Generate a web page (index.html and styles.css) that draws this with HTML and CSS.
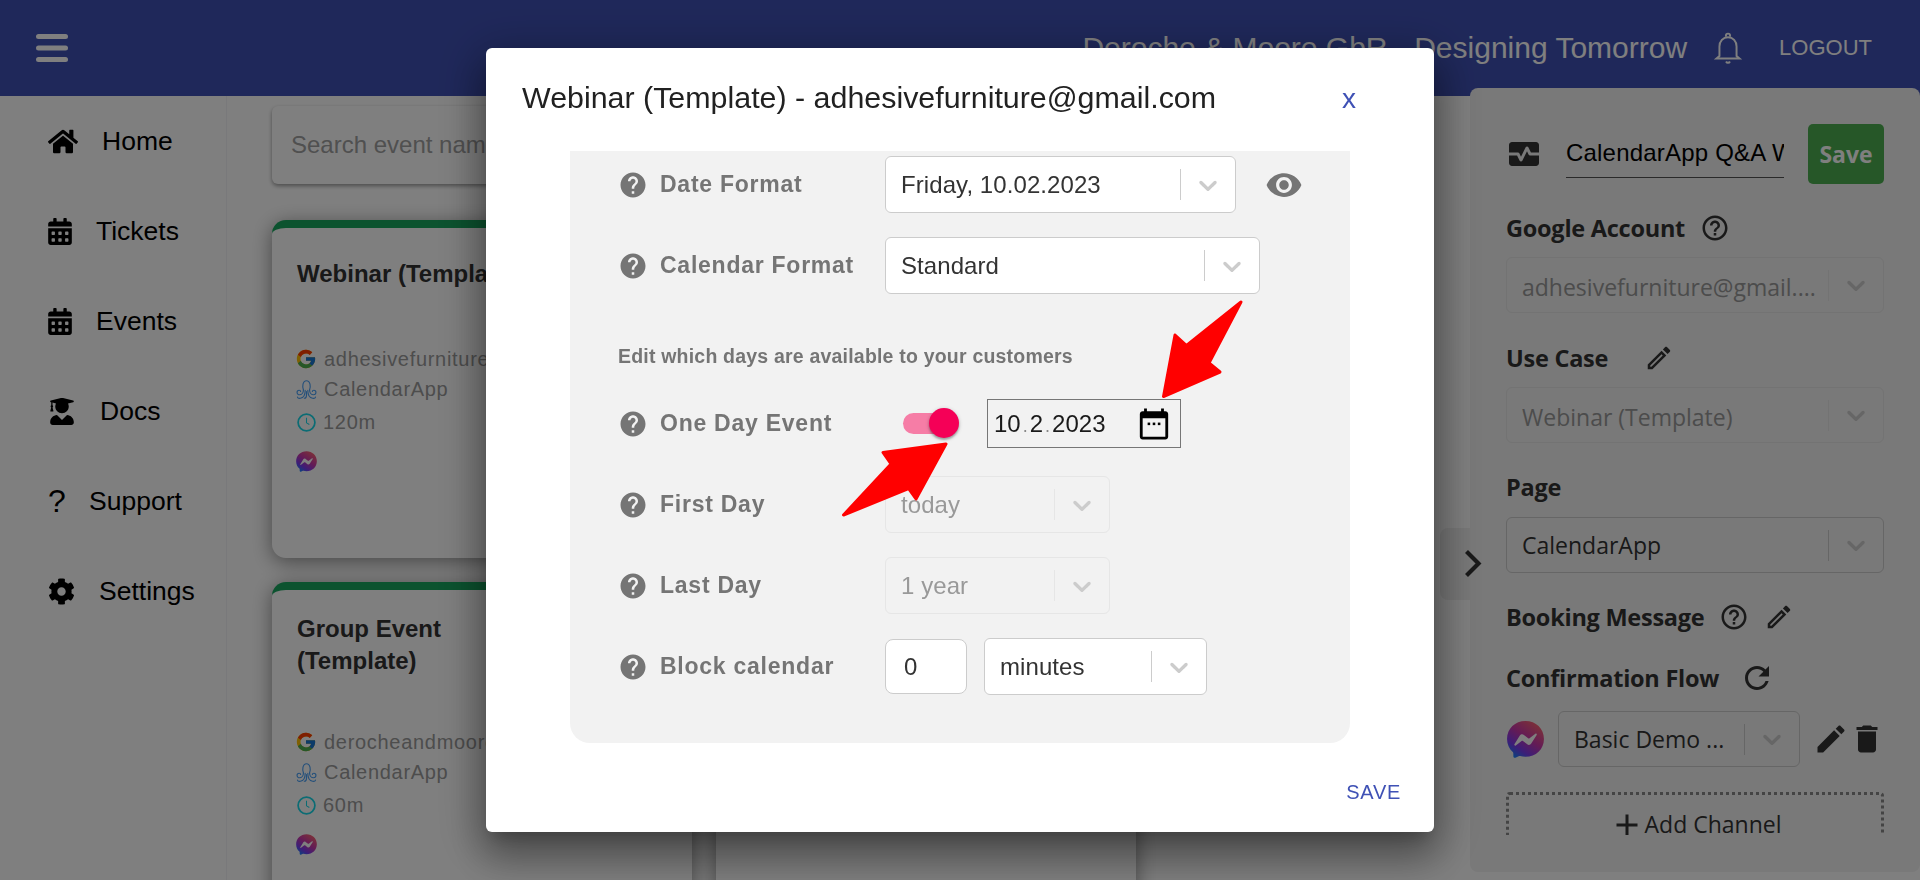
FILE: index.html
```html
<!DOCTYPE html>
<html lang="en">
<head>
<meta charset="utf-8">
<title>Webinar (Template)</title>
<link rel="stylesheet" href="styles.css">
</head>
<body>
<svg class="sprite" aria-hidden="true">
  <defs>
    <linearGradient id="mg" x1="0.85" y1="0" x2="0.15" y2="1">
      <stop offset="0" stop-color="#ff6968"/>
      <stop offset="0.45" stop-color="#c837ab"/>
      <stop offset="0.75" stop-color="#7a3cf0"/>
      <stop offset="1" stop-color="#0a8cff"/>
    </linearGradient>
    <symbol id="i-messenger" viewBox="0 0 40 40">
      <path fill="url(#mg)" d="M20 2C9.9 2 2 9.4 2 19.4c0 5.2 2.1 9.7 5.6 12.8.3.3.5.7.5 1.1l.1 3.2c0 1 1.1 1.7 2 1.3l3.6-1.6c.3-.1.6-.2 1-.1 1.6.5 3.4.7 5.2.7 10.1 0 18-7.4 18-17.4S30.1 2 20 2z"/>
      <path fill="#fff" d="M9.2 24.6l5.3-8.4c.8-1.3 2.6-1.7 3.9-.7l4.2 3.2c.4.3.9.3 1.3 0l5.7-4.3c.8-.6 1.8.3 1.3 1.2l-5.3 8.4c-.8 1.3-2.6 1.7-3.9.7l-4.2-3.2c-.4-.3-.9-.3-1.3 0l-5.7 4.3c-.8.6-1.8-.3-1.3-1.2z"/>
    </symbol>
    <symbol id="i-google" viewBox="0 0 48 48">
      <path fill="#FFC107" d="M43.611 20.083H42V20H24v8h11.303c-1.649 4.657-6.08 8-11.303 8-6.627 0-12-5.373-12-12s5.373-12 12-12c3.059 0 5.842 1.154 7.961 3.039l5.657-5.657C34.046 6.053 29.268 4 24 4 12.955 4 4 12.955 4 24s8.955 20 20 20 20-8.955 20-20c0-1.341-.138-2.65-.389-3.917z"/>
      <path fill="#FF3D00" d="M6.306 14.691l6.571 4.819C14.655 15.108 18.961 12 24 12c3.059 0 5.842 1.154 7.961 3.039l5.657-5.657C34.046 6.053 29.268 4 24 4 16.318 4 9.656 8.337 6.306 14.691z"/>
      <path fill="#4CAF50" d="M24 44c5.166 0 9.86-1.977 13.409-5.192l-6.19-5.238A11.91 11.91 0 0 1 24 36c-5.202 0-9.619-3.317-11.283-7.946l-6.522 5.025C9.505 39.556 16.227 44 24 44z"/>
      <path fill="#1976D2" d="M43.611 20.083H42V20H24v8h11.303a12.04 12.04 0 0 1-4.087 5.571l.003-.002 6.19 5.238C36.971 39.205 44 34 44 24c0-1.341-.138-2.65-.389-3.917z"/>
    </symbol>
    <symbol id="i-octopus" viewBox="0 0 24 24">
      <g fill="none" stroke="currentColor" stroke-width="1.3" stroke-linecap="round">
        <path d="M8.500 12.500C7 9 7.500 2 12 2s5 7 3.500 10.500"/>
        <path d="M8.500 12.500c0 3-2 5.500-4.500 5.500a2.800 2.800 0 0 1-2.800-2.800c0-1.500 1.200-2.400 2.400-2.400 1 0 1.700.7 1.700 1.500"/>
        <path d="M15.500 12.500c0 3 2 5.500 4.500 5.500a2.800 2.800 0 0 0 2.800-2.800c0-1.500-1.200-2.400-2.400-2.400-1 0-1.700.7-1.700 1.500"/>
        <path d="M10.500 13c0 4-1 8-5.500 9-1.500.3-3-.3-3.300-1.300"/>
        <path d="M13.500 13c0 4 1 8 5.500 9 1.500.3 3-.3 3.300-1.300"/>
        <path d="M12 14.500v4c0 2-1 3.500-2.500 3.500"/>
      </g>
    </symbol>
    <symbol id="i-clock" viewBox="0 0 24 24">
      <circle cx="12" cy="12" r="10.600" fill="none" stroke="currentColor" stroke-width="2.200"/>
      <path d="M12 6v6.400l3.600 2.200" fill="none" stroke="currentColor" stroke-width="1.300"/>
    </symbol>
    <symbol id="i-chev" viewBox="0 0 20 20">
      <path d="M4.516 7.548c0.436-0.446 1.043-0.481 1.576 0l3.908 3.747 3.908-3.747c0.533-0.481 1.141-0.446 1.574 0 0.436 0.445 0.408 1.197 0 1.615-0.406 0.418-4.695 4.502-4.695 4.502-0.217 0.223-0.502 0.335-0.787 0.335s-0.57-0.112-0.789-0.335c0 0-4.287-4.084-4.695-4.502s-0.436-1.17 0-1.615z"/>
    </symbol>
    <symbol id="i-help" viewBox="0 0 24 24">
      <path d="M12 2C6.48 2 2 6.48 2 12s4.48 10 10 10 10-4.48 10-10S17.52 2 12 2zm1 17h-2v-2h2v2zm2.07-7.75l-.9.92C13.45 12.9 13 13.5 13 15h-2v-.5c0-1.1.45-2.1 1.17-2.83l1.24-1.26c.37-.36.59-.86.59-1.41 0-1.1-.9-2-2-2s-2 .9-2 2H8c0-2.21 1.79-4 4-4s4 1.79 4 4c0 .88-.36 1.68-.93 2.25z"/>
    </symbol>
    <symbol id="i-help-o" viewBox="0 0 24 24">
      <path d="M11 18h2v-2h-2v2zm1-16C6.48 2 2 6.48 2 12s4.48 10 10 10 10-4.48 10-10S17.52 2 12 2zm0 18c-4.41 0-8-3.59-8-8s3.59-8 8-8 8 3.59 8 8-3.59 8-8 8zm0-14c-2.21 0-4 1.79-4 4h2c0-1.1.9-2 2-2s2 .9 2 2c0 2-3 1.75-3 5h2c0-2.25 3-2.5 3-5 0-2.21-1.79-4-4-4z"/>
    </symbol>
    <symbol id="i-edit-o" viewBox="0 0 24 24">
      <path d="M14.06 9.02l.92.92L5.92 19H5v-.92l9.06-9.06M17.66 3c-.25 0-.51.1-.7.29l-1.83 1.83 3.75 3.75 1.83-1.83c.39-.39.39-1.02 0-1.41l-2.34-2.34c-.2-.2-.45-.29-.71-.29zm-3.6 3.19L3 17.25V21h3.75L17.81 9.94l-3.75-3.75z"/>
    </symbol>
    <symbol id="i-cal" viewBox="0 0 448 512">
      <path d="M0 464c0 26.5 21.5 48 48 48h352c26.5 0 48-21.5 48-48V192H0v272zm320-196c0-6.6 5.4-12 12-12h40c6.6 0 12 5.4 12 12v40c0 6.6-5.4 12-12 12h-40c-6.6 0-12-5.4-12-12v-40zm0 128c0-6.6 5.4-12 12-12h40c6.6 0 12 5.4 12 12v40c0 6.6-5.4 12-12 12h-40c-6.6 0-12-5.4-12-12v-40zM192 268c0-6.6 5.4-12 12-12h40c6.6 0 12 5.4 12 12v40c0 6.6-5.4 12-12 12h-40c-6.6 0-12-5.4-12-12v-40zm0 128c0-6.6 5.4-12 12-12h40c6.6 0 12 5.4 12 12v40c0 6.6-5.4 12-12 12h-40c-6.6 0-12-5.4-12-12v-40zM64 268c0-6.6 5.4-12 12-12h40c6.6 0 12 5.4 12 12v40c0 6.6-5.4 12-12 12H76c-6.6 0-12-5.4-12-12v-40zm0 128c0-6.6 5.4-12 12-12h40c6.6 0 12 5.4 12 12v40c0 6.6-5.4 12-12 12h-40c-6.6 0-12-5.4-12-12v-40zM400 64h-48V16c0-8.8-7.2-16-16-16h-32c-8.8 0-16 7.2-16 16v48H160V16c0-8.8-7.2-16-16-16h-32c-8.8 0-16 7.2-16 16v48H48C21.5 64 0 85.5 0 112v48h448v-48c0-26.5-21.5-48-48-48z"/>
    </symbol>
  </defs>
</svg>

<div class="app">
  <header class="topbar">
    <svg class="burger" viewBox="0 0 32 28"><rect y="0" width="32" height="5" rx="2.5"/><rect y="11.5" width="32" height="5" rx="2.5"/><rect y="23" width="32" height="5" rx="2.5"/></svg>
    <div class="brand">Deroche &amp; Moore GbR - Designing Tomorrow</div>
    <svg class="bell" viewBox="0 0 24 24"><path d="M6.3 17.3V11c0-3.4 2.4-6.2 5.7-6.2s5.700 2.800 5.700 6.200v6.300l2 1.700H4.300z"/><path d="M10.600 4.500V3.800c0-.8.600-1.400 1.400-1.400s1.400.6 1.400 1.400v.7"/><path d="M10.700 21c.3.6.8.900 1.300.900s1-.3 1.300-.9"/></svg>
    <span class="logout">LOGOUT</span>
  </header>

  <div class="body">
    <nav class="nav">
      <a class="nav-item"><svg class="nav-ic nav-ic-home" viewBox="0 0 576 512"><path d="M280.37 148.26L96 300.11V464a16 16 0 0 0 16 16l112.06-.29a16 16 0 0 0 15.92-16V368a16 16 0 0 1 16-16h64a16 16 0 0 1 16 16v95.64a16 16 0 0 0 16 16.05L464 480a16 16 0 0 0 16-16V300L295.67 148.26a12.19 12.19 0 0 0-15.3 0zM571.6 251.47L488 182.56V44.05a12 12 0 0 0-12-12h-56a12 12 0 0 0-12 12v72.61L318.47 43a48 48 0 0 0-61 0L4.34 251.47a12 12 0 0 0-1.6 16.9l25.5 31A12 12 0 0 0 45.15 301l235.22-193.74a12.19 12.19 0 0 1 15.3 0L530.9 301a12 12 0 0 0 16.9-1.6l25.5-31a12 12 0 0 0-1.7-16.93z"/></svg>Home</a>
      <a class="nav-item"><svg class="nav-ic nav-ic-cal"><use href="#i-cal"/></svg>Tickets</a>
      <a class="nav-item"><svg class="nav-ic nav-ic-cal"><use href="#i-cal"/></svg>Events</a>
      <a class="nav-item"><svg class="nav-ic nav-ic-doc" viewBox="0 0 448 512"><path d="M319.4 320.6L224 416l-95.4-95.4C57.1 323.7 0 382.2 0 454.4v9.6c0 26.5 21.5 48 48 48h352c26.5 0 48-21.5 48-48v-9.6c0-72.2-57.1-130.7-128.6-133.8zM13.6 79.8l6.4 1.5v58.4c-7 4.2-12 11.5-12 20.3 0 8.4 4.6 15.4 11.1 19.7L3.5 242c-1.7 6.9 2.1 14 7.6 14h41.8c5.5 0 9.3-7.1 7.6-14l-15.6-62.3C51.4 175.4 56 168.4 56 160c0-8.8-5-16.1-12-20.3V87.1l66 15.9c-8.6 17.2-14 36.4-14 57 0 70.7 57.3 128 128 128s128-57.3 128-128c0-20.6-5.3-39.800-14-57l96.3-23.2c18.2-4.4 18.2-27.1 0-31.5l-190.4-46c-13-3.1-26.7-3.1-39.7 0L13.6 48.2c-18.1 4.4-18.1 27.2 0 31.6z"/></svg>Docs</a>
      <a class="nav-item"><span class="nav-q">?</span>Support</a>
      <a class="nav-item"><svg class="nav-ic nav-ic-cog" viewBox="0 0 512 512"><path d="M487.4 315.7l-42.6-24.6c4.3-23.2 4.3-47 0-70.2l42.6-24.6c4.9-2.8 7.1-8.6 5.5-14-11.1-35.6-30-67.8-54.7-94.6-3.8-4.1-10-5.1-14.8-2.3L380.8 110c-17.9-15.4-38.5-27.3-60.8-35.1V25.8c0-5.6-3.9-10.500-9.400-11.700-36.700-8.200-74.300-7.800-109.200 0-5.500 1.200-9.400 6.100-9.400 11.700V75c-22.200 7.900-42.800 19.800-60.800 35.100L88.700 85.500c-4.900-2.800-11-1.900-14.800 2.300-24.700 26.700-43.600 58.900-54.700 94.600-1.700 5.400.6 11.200 5.500 14L67.300 221c-4.300 23.200-4.300 47 0 70.200l-42.600 24.600c-4.900 2.800-7.100 8.600-5.500 14 11.100 35.600 30 67.800 54.700 94.600 3.800 4.100 10 5.100 14.800 2.300l42.600-24.600c17.900 15.400 38.500 27.300 60.800 35.100v49.200c0 5.600 3.900 10.500 9.400 11.700 36.700 8.200 74.300 7.800 109.200 0 5.500-1.200 9.400-6.100 9.400-11.700v-49.200c22.200-7.900 42.800-19.800 60.800-35.100l42.600 24.600c4.900 2.800 11 1.900 14.800-2.300 24.700-26.700 43.600-58.900 54.700-94.600 1.500-5.500-.7-11.300-5.600-14.100zM256 336c-44.100 0-80-35.900-80-80s35.900-80 80-80 80 35.900 80 80-35.900 80-80 80z"/></svg>Settings</a>
    </nav>

    <main class="content">
      <input class="search" placeholder="Search event name">
      <div class="cards">
        <article class="card">
          <h3 class="card-title card-title-short">Webinar (Template)</h3>
          <div class="meta"><svg class="meta-g"><use href="#i-google"/></svg>adhesivefurniture@gmail.com</div>
          <div class="meta"><svg class="meta-oct"><use href="#i-octopus"/></svg>CalendarApp</div>
          <div class="meta meta-time"><svg class="meta-clock"><use href="#i-clock"/></svg>120m</div>
          <svg class="meta-msg"><use href="#i-messenger"/></svg>
        </article>
        <article class="card"></article>
        <article class="card card-tall">
          <h3 class="card-title">Group Event (Template)</h3>
          <div class="meta"><svg class="meta-g"><use href="#i-google"/></svg>derocheandmoore@gmail.com</div>
          <div class="meta"><svg class="meta-oct"><use href="#i-octopus"/></svg>CalendarApp</div>
          <div class="meta meta-time"><svg class="meta-clock"><use href="#i-clock"/></svg>60m</div>
          <svg class="meta-msg"><use href="#i-messenger"/></svg>
        </article>
        <article class="card"></article>
      </div>
    </main>
  </div>

  <aside class="drawer">
    <div class="drawer-tab"><svg class="drawer-chev" viewBox="0 0 19 29"><path d="M2.500 2.500l12 12-12 12"/></svg></div>
    <div class="drawer-body">
      <div class="drawer-top">
        <svg class="heart" viewBox="0 0 24 24"><path d="M15.110 12.450 14 10.240l-3.110 6.210c-.16.34-.51.55-.89.55s-.73-.21-.89-.55L7.380 13H2v5c0 1.100.9 2 2 2h16c1.100 0 2-.9 2-2v-5h-6c-.38 0-.73-.21-.89-.55z"/><path d="M20 4H4c-1.100 0-2 .9-2 2v5h6c.38 0 .73.21.89.55L10 13.760l3.110-6.210c.34-.68 1.450-.68 1.790 0L16.620 11H22V6c0-1.100-.9-2-2-2z"/></svg>
        <input class="name-input" value="CalendarApp Q&amp;A Webinar">
        <button class="save-btn">Save</button>
      </div>

      <div class="dlabel dlabel-first">Google Account<svg class="dicon dicon-help"><use href="#i-help-o"/></svg></div>
      <div class="sel dsel sel-off"><span class="sel-text">adhesivefurniture@gmail....</span><i class="sel-sep"></i><svg class="sel-chev"><use href="#i-chev"/></svg></div>

      <div class="dlabel">Use Case<svg class="dicon dicon-usecase"><use href="#i-edit-o"/></svg></div>
      <div class="sel dsel sel-off"><span class="sel-text">Webinar (Template)</span><i class="sel-sep"></i><svg class="sel-chev"><use href="#i-chev"/></svg></div>

      <div class="dlabel dlabel-page">Page</div>
      <div class="sel dsel sel-drawer"><span class="sel-text">CalendarApp</span><i class="sel-sep"></i><svg class="sel-chev"><use href="#i-chev"/></svg></div>

      <div class="dlabel dlabel-booking">Booking Message<svg class="dicon dicon-help"><use href="#i-help-o"/></svg><svg class="dicon dicon-edit"><use href="#i-edit-o"/></svg></div>

      <div class="dlabel dlabel-flow">Confirmation Flow<svg class="dicon dicon-ref" viewBox="0 0 24 24"><path d="M17.650 6.350C16.200 4.900 14.210 4 12 4c-4.420 0-7.990 3.580-7.990 8s3.570 8 7.990 8c3.730 0 6.840-2.550 7.730-6h-2.080c-.82 2.330-3.040 4-5.650 4-3.310 0-6-2.690-6-6s2.690-6 6-6c1.660 0 3.140.69 4.220 1.780L13 11h7V4l-2.350 2.350z"/></svg></div>
      <div class="channel">
        <svg class="channel-logo"><use href="#i-messenger"/></svg>
        <div class="sel dsel sel-drawer channel-sel"><span class="sel-text">Basic Demo ...</span><i class="sel-sep"></i><svg class="sel-chev"><use href="#i-chev"/></svg></div>
        <svg class="channel-ic channel-edit" viewBox="0 0 24 24"><path d="M3 17.250V21h3.750L17.810 9.940l-3.750-3.750L3 17.250zM20.710 7.040c.39-.39.39-1.020 0-1.410l-2.340-2.340c-.39-.39-1.020-.39-1.410 0l-1.830 1.830 3.750 3.750 1.830-1.830z"/></svg>
        <svg class="channel-ic channel-del" viewBox="0 0 24 24"><path d="M6 19c0 1.100.9 2 2 2h8c1.100 0 2-.9 2-2V7H6v12zM19 4h-3.500l-1-1h-5l-1 1H5v2h14V4z"/></svg>
      </div>
      <div class="add-channel"><svg class="add-plus" viewBox="0 0 24 24"><path d="M19 13h-6v6h-2v-6H5v-2h6V5h2v6h6v2z"/></svg><span class="add-text">Add Channel</span></div>
    </div>
  </aside>
</div>

<div class="backdrop">
  <section class="modal">
    <div class="modal-head">
      <h2 class="modal-title">Webinar (Template) - adhesivefurniture@gmail.com</h2>
      <span class="modal-x">x</span>
    </div>
    <div class="modal-panel">
      <div class="row">
        <svg class="row-help"><use href="#i-help"/></svg><label class="row-label">Date Format</label>
        <div class="sel sel-date"><span class="sel-text">Friday, 10.02.2023</span><i class="sel-sep"></i><svg class="sel-chev"><use href="#i-chev"/></svg></div>
        <svg class="eye" viewBox="0 0 24 24"><path d="M12 4.500C7 4.500 2.730 7.610 1 12c1.730 4.390 6 7.500 11 7.500s9.270-3.110 11-7.500c-1.730-4.390-6-7.500-11-7.500zM12 17c-2.760 0-5-2.240-5-5s2.240-5 5-5 5 2.240 5 5-2.240 5-5 5zm0-8c-1.660 0-3 1.340-3 3s1.340 3 3 3 3-1.340 3-3-1.340-3-3-3z"/></svg>
      </div>
      <div class="row">
        <svg class="row-help"><use href="#i-help"/></svg><label class="row-label">Calendar Format</label>
        <div class="sel sel-cal"><span class="sel-text">Standard</span><i class="sel-sep"></i><svg class="sel-chev"><use href="#i-chev"/></svg></div>
      </div>
      <p class="note">Edit which days are available to your customers</p>
      <div class="row">
        <svg class="row-help"><use href="#i-help"/></svg><label class="row-label">One Day Event</label>
        <div class="switch"><div class="switch-track"><span class="switch-thumb"></span></div></div>
        <div class="date-input"><span>10<i class="date-dot">.</i>2<i class="date-dot">.</i>2023</span>
          <svg class="date-ic" viewBox="0 0 24 24"><path d="M20 3h-1V1h-2v2H7V1H5v2H4c-1.100 0-2 .9-2 2v16c0 1.100.9 2 2 2h16c1.100 0 2-.9 2-2V5c0-1.100-.9-2-2-2zm0 18H4V8h16v13z"/><rect x="7.500" y="11" width="1.800" height="1.800"/><rect x="11.100" y="11" width="1.800" height="1.800"/><rect x="14.700" y="11" width="1.800" height="1.800"/></svg>
        </div>
      </div>
      <div class="row">
        <svg class="row-help"><use href="#i-help"/></svg><label class="row-label">First Day</label>
        <div class="sel sel-small sel-off"><span class="sel-text">today</span><i class="sel-sep"></i><svg class="sel-chev"><use href="#i-chev"/></svg></div>
      </div>
      <div class="row">
        <svg class="row-help"><use href="#i-help"/></svg><label class="row-label">Last Day</label>
        <div class="sel sel-small sel-off"><span class="sel-text">1 year</span><i class="sel-sep"></i><svg class="sel-chev"><use href="#i-chev"/></svg></div>
      </div>
      <div class="row">
        <svg class="row-help"><use href="#i-help"/></svg><label class="row-label">Block calendar</label>
        <input class="num" value="0">
        <div class="sel sel-unit"><span class="sel-text">minutes</span><i class="sel-sep"></i><svg class="sel-chev"><use href="#i-chev"/></svg></div>
      </div>
    </div>
    <div class="modal-foot"><span class="modal-save">SAVE</span></div>
  </section>
  <svg class="arrows" viewBox="0 0 1920 880">
    <path d="M1163.500 396.500 1175 335 1186.500 345.500 1241 302 1209 363 1220 372z"/>
    <path d="M946 444 883 452.500 891 464 843.500 515 908.500 488.500 916 499z"/>
  </svg>
</div>
</body>
</html>
```

FILE: styles.css
```css
* { box-sizing: border-box; }

html, body {
  margin: 0;
  height: 880px;
  overflow: hidden;
  background: #fff;
  font-family: "Liberation Sans", Arial, sans-serif;
  color: #000;
}

.sprite { width: 0; height: 0; position: absolute; }

.app { position: relative; height: 880px; overflow: hidden; }

/* top bar */
.topbar {
  height: 96px;
  background: #3f51b5;
  color: #fff;
  display: flex;
  align-items: center;
  padding: 0 48px 0 36px;
}
.burger { width: 32px; height: 28px; fill: #fff; }
.brand { margin-left: auto; font-size: 30px; white-space: nowrap; }
.bell { width: 36px; height: 36px; margin-left: 23px; fill: none; stroke: #fff; stroke-width: 1.3; }
.logout { margin-left: 33px; font-size: 22px; }

/* layout */
.body { display: flex; height: 784px; }

.nav {
  width: 227px;
  flex: none;
  padding: 20px 0 0 48px;
  border-right: 1px solid #f2f3f6;
  display: flex;
  flex-direction: column;
  gap: 40px;
}
.nav-item { display: flex; align-items: center; height: 50px; font-size: 26.5px; gap: 24px; }
.nav-ic { fill: #000; flex: none; }
.nav-ic-home { width: 30px; height: 27px; }
.nav-ic-cal { width: 24px; height: 27px; }
.nav-ic-doc { width: 24px; height: 27px; margin-left: 2px; margin-right: 2px; }
.nav-ic-cog { width: 27px; height: 27px; }
.nav-q { font-size: 32px; width: 17px; line-height: 1; }

.content { flex: 1; padding: 10px 0 0 45px; }

.search {
  display: block;
  width: 864px;
  height: 78px;
  border: 0;
  border-radius: 6px;
  padding: 0 19px;
  margin: 0;
  font: 24px "Liberation Sans", Arial, sans-serif;
  background: #fff;
  box-shadow: 0 2px 4px rgba(0,0,0,.4);
}
.search::placeholder { color: #a0a0a0; opacity: 1; }

.cards {
  display: grid;
  grid-template-columns: 420px 420px;
  grid-auto-rows: 338px;
  gap: 24px;
  margin-top: 36px;
}
.card {
  background: #fff;
  border-top: 8px solid #18a65f;
  border-radius: 14px;
  padding: 30px 25px 0;
  box-shadow: 0 4px 20px rgba(0,0,0,.45);
  overflow: hidden;
}
.card-tall { padding-top: 23px; }
.card-title { margin: 0 0 50px; font-size: 24px; line-height: 32px; font-weight: 700; color: #333; width: 220px; }
.card-title-short { min-height: 36px; white-space: nowrap; width: auto; }
.meta {
  display: flex;
  align-items: center;
  height: 30px;
  font-size: 20px;
  letter-spacing: .7px;
  color: #9a9a9a;
  white-space: nowrap;
}
.meta-time { margin-top: 3px; }
.meta-g { width: 22px; height: 22px; margin: 0 7px 0 -2px; flex: none; }
.meta-oct { width: 21px; height: 21px; margin: 0 7px 0 -1px; color: #4aa0f5; flex: none; }
.meta-clock { width: 19px; height: 19px; margin-right: 7px; color: #18d8e8; flex: none; }
.meta-msg { display: block; width: 23px; height: 23px; margin: 13px 0 0 -2px; }

/* right drawer */
.drawer {
  position: absolute;
  left: 1470px;
  top: 88px;
  width: 450px;
  height: 784px;
  background: #f2f2f2;
  border-radius: 8px;
}
.drawer-tab {
  position: absolute;
  left: -30px;
  top: 440px;
  width: 30px;
  height: 72px;
  background: #f0f0f0;
  border-radius: 8px 0 0 8px;
}
.drawer-chev {
  position: absolute;
  left: 24px;
  top: 21px;
  width: 19px;
  height: 29px;
  fill: none;
  stroke: #333;
  stroke-width: 4.2;
}
.drawer-body {
  height: 747px;
  padding: 36px 36px 0;
  overflow: hidden;
  font-family: "Open Sans", sans-serif;
}
.drawer-top { display: flex; align-items: flex-start; }
.heart { width: 36px; height: 36px; fill: #333; margin-top: 12px; flex: none; }
.name-input {
  width: 218px;
  margin: 8px 0 0 24px;
  height: 46px;
  padding: 0 0 4px;
  border: 0;
  border-bottom: 1px solid #555;
  background: transparent;
  font: 24px "Liberation Sans", Arial, sans-serif;
  letter-spacing: .2px;
  color: #000;
  outline: 0;
}
.save-btn {
  width: 76px;
  height: 60px;
  margin-left: 24px;
  border: 0;
  border-radius: 5px;
  background: #4caf50;
  color: #fff;
  font: 700 23px "Open Sans", sans-serif;
  padding: 0;
}
.dlabel {
  display: flex;
  align-items: center;
  height: 30px;
  margin: 30px 0 14px;
  font-size: 23.5px;
  letter-spacing: -.25px;
  font-weight: 700;
  color: #333;
  white-space: nowrap;
}
.dlabel-first { margin-top: 29px; }
.dlabel-page { margin: 29px 0 15px; }
.dlabel-booking { margin: 29px 0 0; }
.dlabel-flow { margin: 31px 0 18px; }
.dicon { width: 30px; height: 30px; fill: #333; flex: none; }
.dicon-help { margin-left: 15px; }
.dicon-usecase { margin-left: 36px; }
.dicon-edit { margin-left: 15px; }
.dicon-ref { width: 36px; height: 36px; margin-left: 20px; }

.sel {
  display: flex;
  align-items: center;
  height: 57px;
  padding-left: 15px;
  background: #fff;
  border: 1px solid #ccc;
  border-radius: 6px;
  font-size: 24px;
  letter-spacing: .08px;
  color: #333;
  flex: none;
}
.sel-text { flex: 1; white-space: nowrap; overflow: hidden; }
.sel-sep { width: 1px; height: 31px; background: #ccc; flex: none; }
.sel-chev { width: 30px; height: 30px; margin: 0 12px; fill: #ccc; flex: none; }

.sel-date { width: 351px; }
.sel-cal { width: 375px; }
.sel-small { width: 225px; }
.sel-unit { width: 223px; margin-left: 17px; }
.sel-off { background: #f2f2f2; border-color: #e6e6e6; color: #999; }
.sel-off .sel-sep { background: #e6e6e6; }

.dsel { width: 378px; height: 56px; font-size: 23px; letter-spacing: 0; }
.dsel.sel-off .sel-text { padding-top: 4px; }
.sel-drawer { background: transparent; border-color: #ccc; }
.channel-sel { width: 242px; margin-left: 12px; }

.channel { display: flex; align-items: center; height: 56px; }
.channel-logo { width: 41px; height: 41px; margin-left: -1px; flex: none; }
.channel-ic { fill: #333; flex: none; width: 36px; height: 36px; }
.channel-edit { margin-left: 13px; }

.add-channel {
  display: flex;
  align-items: flex-start;
  justify-content: center;
  height: 62px;
  padding-top: 12px;
  margin-top: 25px;
  border: 3px dotted #888;
  border-radius: 4px;
  font-size: 23px;
  line-height: 1;
  color: #333;
}
.add-plus { width: 36px; height: 36px; fill: #333; }
.add-text { margin-top: 6px; }

/* modal */
.backdrop {
  position: fixed;
  inset: 0;
  background: rgba(0,0,0,.5);
  display: flex;
  align-items: center;
  justify-content: center;
}
.modal {
  width: 948px;
  height: 784px;
  background: #fff;
  border-radius: 6px;
  box-shadow: 0 11px 15px -7px rgba(0,0,0,.2), 0 24px 38px 3px rgba(0,0,0,.28), 0 9px 46px 8px rgba(0,0,0,.24);
  display: flex;
  flex-direction: column;
}
.modal-head {
  height: 103px;
  padding: 28px 78px 0 36px;
  display: flex;
  justify-content: space-between;
  flex: none;
}
.modal-title { margin: 0; font-size: 30.4px; line-height: 42px; font-weight: 400; color: #212121; }
.modal-x { font-size: 28px; line-height: 46px; color: #3f51b5; }

.modal-panel {
  height: 592px;
  margin: 0 84px;
  flex: none;
  padding-top: 5px;
  background: #f2f2f2;
  border-radius: 0 0 20px 20px;
  overflow: hidden;
  display: flex;
  flex-direction: column;
  gap: 24px;
}
.row { display: flex; align-items: center; height: 57px; padding-left: 48px; flex: none; }
.row-help { width: 30px; height: 30px; fill: #757575; flex: none; }
.row-label {
  width: 237px;
  padding-left: 12px;
  flex: none;
  font-size: 23px;
  font-weight: 700;
  letter-spacing: .75px;
  color: #757575;
  white-space: nowrap;
}
.eye { width: 38px; height: 38px; margin-left: 29px; fill: #757575; }
.note {
  margin: 0;
  height: 53px;
  padding: 25px 0 0 48px;
  font-size: 19.5px;
  line-height: 26px;
  font-weight: 700;
  color: #757575;
  letter-spacing: .2px;
}

.switch { width: 102px; padding-left: 18px; flex: none; }
.switch-track {
  position: relative;
  width: 48px;
  height: 21px;
  border-radius: 11px;
  background: #f67da6;
}
.switch-thumb {
  position: absolute;
  right: -8px;
  top: -5px;
  width: 30px;
  height: 30px;
  border-radius: 50%;
  background: #f50057;
  box-shadow: 0 2px 2px rgba(0,0,0,.25), 0 1px 4px rgba(0,0,0,.2);
}
.date-input {
  width: 194px;
  height: 49px;
  border: 1px solid #767676;
  display: flex;
  align-items: center;
  justify-content: space-between;
  padding: 0 9px 0 6px;
  font-size: 24px;
  color: #1a1a1a;
}
.date-dot { font-style: normal; font-size: 18px; margin: 0 2px; color: #888; }
.date-ic { width: 34px; height: 34px; fill: #000; }

.num {
  width: 82px;
  height: 55px;
  padding: 0 18px;
  border: 1px solid #ccc;
  border-radius: 8px;
  background: #fff;
  font: 24px "Liberation Sans", Arial, sans-serif;
  color: #333;
}

.modal-foot { flex: 1; padding: 37px 33px 0 0; display: flex; justify-content: flex-end; }
.modal-save { font-size: 20px; line-height: 24px; letter-spacing: .7px; color: #3f51b5; }

.arrows {
  position: absolute;
  inset: 0;
  width: 1920px;
  height: 880px;
  fill: #f00;
  stroke: #f00;
  stroke-width: 3;
  stroke-linejoin: round;
  pointer-events: none;
}
```
